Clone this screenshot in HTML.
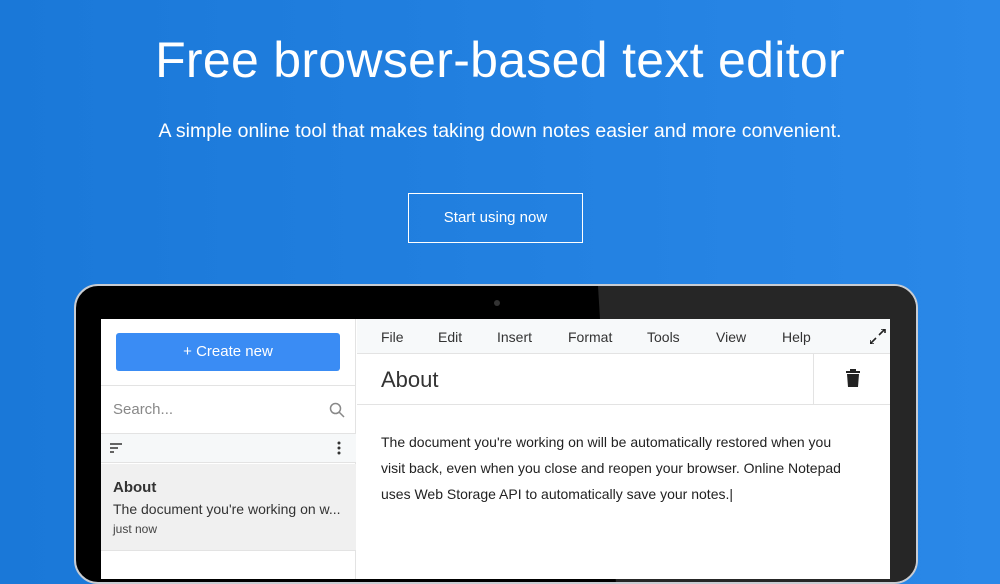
<!DOCTYPE html><html><head><meta charset="utf-8"><style>
*{margin:0;padding:0;box-sizing:border-box}
body{width:1000px;height:562px;overflow:hidden;background:linear-gradient(90deg,#1a78d8,#2a88e8);font-family:"Segoe UI","Liberation Sans",sans-serif;position:relative;color:#222}
.a{position:absolute}
h1{position:absolute;top:31px;width:100%;text-align:center;color:#fff;font-weight:400;font-size:50px;letter-spacing:0.3px}
.sub{top:120px;width:100%;text-align:center;color:#fff;font-size:19.5px}
.btn{left:408px;top:193px;width:175px;height:50px;border:1px solid #fff;color:#fff;font-size:15px;text-align:center;line-height:48px}
.lap{left:74px;top:284px;width:844px;height:300px;border-radius:24px;background:#000;border:2px solid #c8ccd2;overflow:hidden}
.scr{left:101px;top:319px;width:789px;height:260px;background:#fff}
.menu span{position:absolute;top:10px;font-size:14px;color:#333}
</style></head><body>
<h1>Free browser-based text editor</h1>
<div class="a sub">A simple online tool that makes taking down notes easier and more convenient.</div>
<div class="a btn">Start using now</div>
<div class="a lap"><svg class="a" style="left:0;top:0" width="842" height="298"><path d="M522 0 L842 0 L842 298 L540 298 Z" fill="#262626"/></svg><div class="a" style="left:418px;top:14px;width:6px;height:6px;border-radius:3px;background:#333"></div></div>
<div class="a scr">
 <div class="a" style="left:0;top:0;width:255px;height:260px;border-right:1px solid #e3e3e3">
  <div class="a" style="left:15px;top:14px;width:224px;height:38px;background:#3a8cf4;border-radius:3px;color:#fff;font-size:15px;text-align:center;line-height:38px">+ Create new</div>
  <div class="a" style="left:0;top:66px;width:255px;height:1px;background:#e3e3e3"></div>
  <div class="a" style="left:12px;top:82px;font-size:15px;color:#888">Search...</div>
  <svg class="a" style="left:228px;top:83px" width="16" height="16"><circle cx="6.5" cy="6.5" r="5" fill="none" stroke="#888" stroke-width="1.5"/><path d="M10 10 L15 15" stroke="#888" stroke-width="1.5"/></svg>
  <div class="a" style="left:0;top:114px;width:255px;height:30px;background:#f6f8f9;border-top:1px solid #e3e3e3;border-bottom:1px solid #e3e3e3"></div>
  <svg class="a" style="left:9px;top:124px" width="14" height="10"><path d="M0 1h12M0 5h8M0 9h4" stroke="#333" stroke-width="1.5"/></svg>
  <svg class="a" style="left:236px;top:122px" width="4" height="14"><circle cx="2" cy="2" r="1.5" fill="#333"/><circle cx="2" cy="7" r="1.5" fill="#333"/><circle cx="2" cy="12" r="1.5" fill="#333"/></svg>
  <div class="a" style="left:0;top:145px;width:255px;height:87px;background:#f0f0f0;border-bottom:1px solid #e3e3e3"></div>
  <div class="a" style="left:12px;top:160px;font-size:15px;font-weight:bold;color:#333">About</div>
  <div class="a" style="left:12px;top:182px;font-size:14px;color:#333;white-space:nowrap">The document you're working on w...</div>
  <div class="a" style="left:12px;top:203px;font-size:12px;color:#444">just now</div>
 </div>
 <div class="a menu" style="left:256px;top:0;width:533px;height:35px;background:#f7f9fa;border-bottom:1px solid #e3e3e3">
  <span style="left:24px">File</span><span style="left:81px">Edit</span><span style="left:140px">Insert</span><span style="left:211px">Format</span><span style="left:290px">Tools</span><span style="left:359px">View</span><span style="left:425px">Help</span>
  <svg class="a" style="left:513px;top:10px" width="16" height="15"><path d="M9 6 L15 0 M11 0h4v4 M6 9 L0 15 M0 11v4h4" stroke="#222" stroke-width="1.6" fill="none"/></svg>
 </div>
 <div class="a" style="left:280px;top:48px;font-size:22px;color:#333">About</div>
 <div class="a" style="left:712px;top:35px;width:1px;height:50px;background:#e3e3e3"></div>
 <svg class="a" style="left:745px;top:50px" width="14" height="18"><rect x="0" y="2" width="14" height="2" fill="#222"/><rect x="4" y="0" width="6" height="3" fill="#222"/><path d="M1 5h12l-1 13h-10z" fill="#222"/></svg>
 <div class="a" style="left:256px;top:85px;width:533px;height:1px;background:#e3e3e3"></div>
 <div class="a" style="left:280px;top:110px;font-size:14px;line-height:26px;color:#222;white-space:nowrap">The document you're working on will be automatically restored when you<br>visit back, even when you close and reopen your browser. Online Notepad<br>uses Web Storage API to automatically save your notes.|</div>
</div>
</body></html>
